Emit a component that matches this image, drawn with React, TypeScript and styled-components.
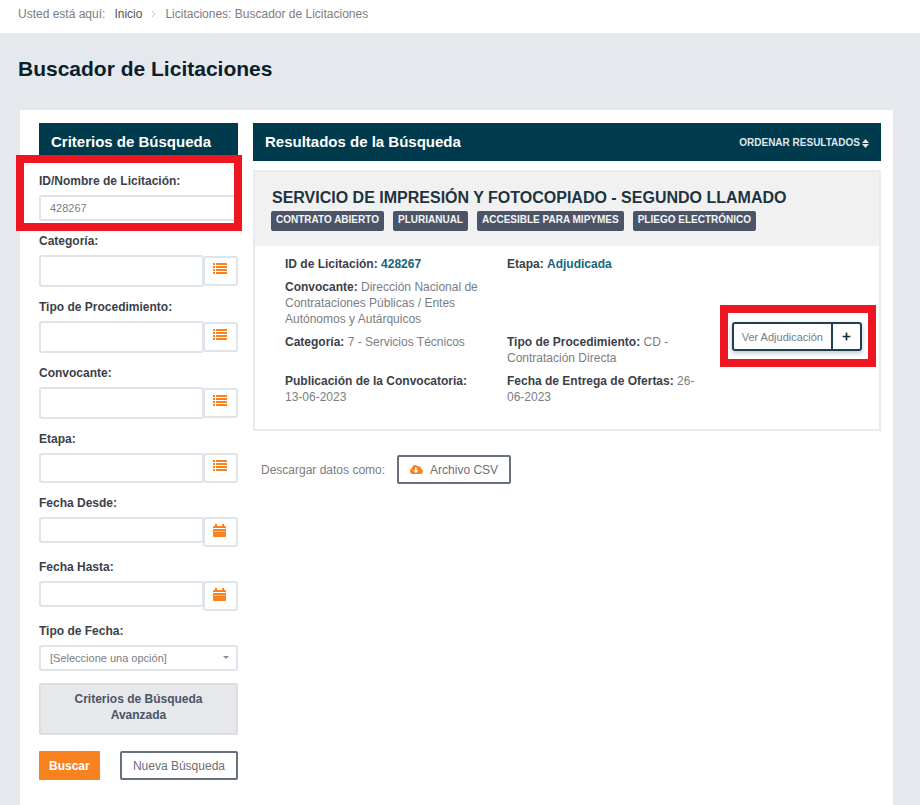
import React from "react";
import styled, { createGlobalStyle, css } from "styled-components";
import { FaCloudDownloadAlt, FaPlus } from "react-icons/fa";

const colors = {
  page: "#e5e8ed",
  navy: "#003a4d",
  ink: "#3b3f4a",
  muted: "#7b7d82",
  line: "#dfe4ea",
  slate: "#4b5567",
  orange: "#f88220",
  teal: "#17647f",
  red: "#ee1620",
};

const GlobalStyle = createGlobalStyle`
  *, *::before, *::after { box-sizing: border-box; }
  body {
    margin: 0;
    background: ${colors.page};
    color: ${colors.muted};
    font-family: "Liberation Sans", Arial, sans-serif;
    font-size: 12px;
    line-height: 16px;
  }
  button, input, select { font: inherit; }
`;

const Page = styled.div`
  display: flex;
  flex-direction: column;
  min-height: 100vh;
`;

const Breadcrumb = styled.nav`
  display: flex;
  align-items: center;
  gap: 9px;
  padding: 6px 18px 11px;
  background: #fff;
  white-space: nowrap;
`;

const CrumbLink = styled.a`
  color: #50525a;
  text-decoration: none;
`;

const CrumbArrow = styled.svg`
  width: 5px;
  height: 8px;
  fill: none;
  stroke: #c3c5ca;
`;

const PageTitle = styled.h1`
  margin: 24px 18px 29px;
  color: #0a1f2c;
  font-size: 21px;
  line-height: 24px;
`;

const Panel = styled.main`
  flex: 1;
  display: grid;
  grid-template-columns: 199fr 628fr;
  align-items: start;
  gap: 15px;
  margin: 0 27px 0 20px;
  padding: 13px 12px 24px 19px;
  background: #fff;
`;

const Column = styled.section`
  display: flex;
  flex-direction: column;
  min-width: 0;
`;

const Filters = styled.form`
  display: flex;
  flex-direction: column;
  gap: 12px;
`;

const Bar = styled.header`
  display: flex;
  align-items: center;
  justify-content: space-between;
  height: 38px;
  padding: 0 12px;
  background: ${colors.navy};
  color: #fff;
`;

const BarTitle = styled.h2`
  margin: 0;
  font-size: 15px;
  line-height: 20px;
  white-space: nowrap;
`;

const SortButton = styled.button`
  display: flex;
  align-items: center;
  gap: 2px;
  padding: 2px 0 0;
  border: 0;
  background: none;
  color: #dfe8ec;
  font-size: 10px;
  font-weight: 700;
  cursor: pointer;
`;

const Field = styled.div`
  position: relative;
  display: flex;
  flex-direction: column;
  gap: 6px;
`;

const Label = styled.label`
  color: ${colors.ink};
  font-weight: 700;
`;

const control = css`
  min-width: 0;
  border: 2px solid ${colors.line};
  border-radius: 3px;
  background: #fff;
  color: ${colors.muted};
  font-size: 11px;
`;

const TextInput = styled.input<{ $height: number }>`
  ${control}
  flex: 1 1 auto;
  height: ${(p) => p.$height}px;
  padding: 0 9px;
`;

const InputGroup = styled.div<{ $align: "center" | "flex-start" }>`
  display: flex;
  align-items: ${(p) => p.$align};
`;

const PickerButton = styled.button`
  ${control}
  flex: 0 0 35px;
  display: flex;
  justify-content: center;
  height: 30px;
  margin-left: -1px;
  padding: 5px 2px 0 0;
  color: ${colors.orange};
  cursor: pointer;
`;

const SelectBox = styled.div`
  position: relative;
  display: flex;
`;

const Select = styled.select`
  ${control}
  flex: 1;
  height: 26px;
  padding: 0 24px 0 9px;
  appearance: none;
`;

const Caret = styled.svg`
  position: absolute;
  top: 11px;
  right: 9px;
  width: 6px;
  height: 4px;
  fill: #8b8d92;
  pointer-events: none;
`;

const AdvancedButton = styled.button`
  display: flex;
  justify-content: center;
  min-height: 52px;
  padding: 6px 28px;
  border: 2px solid #dcdedf;
  border-radius: 2px;
  background: #e6e8ec;
  color: ${colors.slate};
  font-weight: 700;
  cursor: pointer;
`;

const Actions = styled.div`
  display: flex;
  justify-content: space-between;
  margin-top: 4px;
`;

const SolidButton = styled.button`
  height: 29px;
  padding: 0 10px;
  border: 0;
  border-radius: 1px;
  background: ${colors.orange};
  color: #fff;
  font-weight: 700;
  cursor: pointer;
`;

const OutlineButton = styled.button`
  display: flex;
  align-items: center;
  gap: 7px;
  height: 29px;
  padding: 0 11px;
  border: 2px solid #66707f;
  border-radius: 2px;
  background: #fff;
  color: #6b6e76;
  white-space: nowrap;
  cursor: pointer;
`;

const Card = styled.article`
  margin-top: 9px;
  border: 2px solid #e8eaef;
`;

const CardHead = styled.div`
  display: flex;
  flex-direction: column;
  gap: 3px;
  padding: 16px 16px 15px;
  background: #f1f1f1;
`;

const CardTitle = styled.h3`
  margin: 0;
  padding-left: 1px;
  color: #1d3340;
  font-size: 16px;
  line-height: 20px;
`;

const Tags = styled.ul`
  display: flex;
  flex-wrap: wrap;
  gap: 9px;
  margin: 0;
  padding: 0;
  list-style: none;
`;

const Tag = styled.li`
  padding: 1px 5px 3px;
  border-radius: 2px;
  background: ${colors.slate};
  color: #f4f5f7;
  font-size: 10px;
  font-weight: 700;
`;

const CardBody = styled.div`
  display: grid;
  grid-template-columns: 444fr 133fr;
  padding: 10px 17px 24px 30px;
`;

const Facts = styled.dl`
  display: grid;
  grid-template-columns: 1fr 1fr;
  gap: 7px 0;
  margin: 0;
`;

const Fact = styled.div`
  padding-right: 24px;
`;

const Term = styled.dt`
  display: inline;
  color: ${colors.ink};
  font-weight: 700;
`;

const Detail = styled.dd<{ $strong?: boolean }>`
  display: inline;
  margin: 0;
  ${(p) => p.$strong && css`color: ${colors.teal}; font-weight: 700;`}
`;

const CardActions = styled.div`
  display: flex;
  align-items: center;
  justify-content: flex-end;
  padding-top: 12px;
`;

const ButtonGroup = styled.div`
  position: relative;
  display: flex;
  box-shadow: 0 2px 5px #b9c6d1;
`;

const GroupButton = styled.button<{ $side: "left" | "right" }>`
  display: flex;
  align-items: center;
  height: 29px;
  padding: 0 ${(p) => (p.$side === "left" ? 8 : 9)}px;
  border: 2px solid #213f4d;
  border-radius: ${(p) => (p.$side === "left" ? "3px 0 0 3px" : "0 3px 3px 0")};
  margin-left: ${(p) => (p.$side === "left" ? 0 : -2)}px;
  background: #fff;
  color: ${(p) => (p.$side === "left" ? "#777b84" : "#12303e")};
  font-size: 11px;
  white-space: nowrap;
  cursor: pointer;
`;

const Highlight = styled.div<{ $inset: string }>`
  position: absolute;
  z-index: 1;
  inset: ${(p) => p.$inset};
  border: 8px solid ${colors.red};
  pointer-events: none;
`;

const Download = styled.div`
  display: flex;
  align-items: center;
  gap: 12px;
  margin: 24px 8px 0;
`;

const ListIcon = () => (
  <svg width="14" height="12" viewBox="0 0 14 12" fill="currentColor" aria-hidden="true">
    {[0, 3, 6, 9].map((y) => (
      <React.Fragment key={y}>
        <rect x="0" y={y} width="2" height="2" />
        <rect x="3" y={y} width="11" height="2" />
      </React.Fragment>
    ))}
  </svg>
);

const CalendarIcon = () => (
  <svg width="13" height="13" viewBox="0 0 13 13" fill="currentColor" aria-hidden="true">
    <path d="M2 0h2v2h5V0h2v2h1q1 0 1 1v1H0V3q0-1 1-1h1z" />
    <path d="M0 5h13v7q0 1-1 1H1q-1 0-1-1z" />
    <path d="M1 7.500h11" stroke="#fcc08c" />
  </svg>
);

const SortIcon = () => (
  <svg width="7" height="9" viewBox="0 0 7 9" fill="currentColor" aria-hidden="true">
    <path d="M3.500 0L7 4H0zM0 5h7L3.500 9z" />
  </svg>
);

const pickers = [
  { id: "categoria", label: "Categoría:", height: 32 },
  { id: "tipo-procedimiento", label: "Tipo de Procedimiento:", height: 32 },
  { id: "convocante", label: "Convocante:", height: 32 },
  { id: "etapa", label: "Etapa:", height: 30 },
];

const dates = [
  { id: "fecha-desde", label: "Fecha Desde:" },
  { id: "fecha-hasta", label: "Fecha Hasta:" },
];

const tags = ["CONTRATO ABIERTO", "PLURIANUAL", "ACCESIBLE PARA MIPYMES", "PLIEGO ELECTRÓNICO"];

const facts = [
  { term: "ID de Licitación:", value: "428267", strong: true },
  { term: "Etapa:", value: "Adjudicada", strong: true },
  {
    term: "Convocante:",
    value: "Dirección Nacional de Contrataciones Públicas / Entes Autónomos y Autárquicos",
  },
  null,
  { term: "Categoría:", value: "7 - Servicios Técnicos" },
  { term: "Tipo de Procedimiento:", value: "CD - Contratación Directa" },
  { term: "Publicación de la Convocatoria:", value: "13-06-2023" },
  { term: "Fecha de Entrega de Ofertas:", value: "26-06-2023" },
];

export default function App() {
  return (
    <>
      <GlobalStyle />
      <Page>
        <Breadcrumb aria-label="Ruta">
          <span>Usted está aquí:</span>
          <CrumbLink href="#">Inicio</CrumbLink>
          <CrumbArrow viewBox="0 0 5 8" aria-hidden="true">
            <path d="M1 1l3 3-3 3" />
          </CrumbArrow>
          <span>Licitaciones: Buscador de Licitaciones</span>
        </Breadcrumb>
        <PageTitle>Buscador de Licitaciones</PageTitle>
        <Panel>
          <Column>
            <Filters onSubmit={(e) => e.preventDefault()}>
              <Bar>
                <BarTitle>Criterios de Búsqueda</BarTitle>
              </Bar>
              <Field>
                <Label htmlFor="nombre">ID/Nombre de Licitación:</Label>
                <TextInput id="nombre" $height={26} defaultValue="428267" />
                <Highlight $inset="-18px -4px -10px -23px" />
              </Field>
              {pickers.map((p) => (
                <Field key={p.id}>
                  <Label htmlFor={p.id}>{p.label}</Label>
                  <InputGroup $align="center">
                    <TextInput id={p.id} $height={p.height} />
                    <PickerButton type="button" aria-label={`Elegir ${p.label}`}>
                      <ListIcon />
                    </PickerButton>
                  </InputGroup>
                </Field>
              ))}
              {dates.map((d) => (
                <Field key={d.id}>
                  <Label htmlFor={d.id}>{d.label}</Label>
                  <InputGroup $align="flex-start">
                    <TextInput id={d.id} $height={26} />
                    <PickerButton type="button" aria-label={`Elegir ${d.label}`}>
                      <CalendarIcon />
                    </PickerButton>
                  </InputGroup>
                </Field>
              ))}
              <Field>
                <Label htmlFor="tipo-fecha">Tipo de Fecha:</Label>
                <SelectBox>
                  <Select id="tipo-fecha">
                    <option>[Seleccione una opción]</option>
                  </Select>
                  <Caret viewBox="0 0 6 4" aria-hidden="true">
                    <path d="M0 0h6L3 3z" />
                  </Caret>
                </SelectBox>
              </Field>
              <AdvancedButton type="button">Criterios de Búsqueda Avanzada</AdvancedButton>
              <Actions>
                <SolidButton type="submit">Buscar</SolidButton>
                <OutlineButton type="reset">Nueva Búsqueda</OutlineButton>
              </Actions>
            </Filters>
          </Column>
          <Column>
            <Bar>
              <BarTitle>Resultados de la Búsqueda</BarTitle>
              <SortButton type="button">
                ORDENAR RESULTADOS <SortIcon />
              </SortButton>
            </Bar>
            <Card>
              <CardHead>
                <CardTitle>SERVICIO DE IMPRESIÓN Y FOTOCOPIADO - SEGUNDO LLAMADO</CardTitle>
                <Tags>
                  {tags.map((t) => (
                    <Tag key={t}>{t}</Tag>
                  ))}
                </Tags>
              </CardHead>
              <CardBody>
                <Facts>
                  {facts.map((f, i) =>
                    f ? (
                      <Fact key={f.term}>
                        <Term>{f.term}</Term>{" "}
                        <Detail $strong={f.strong}>{f.value}</Detail>
                      </Fact>
                    ) : (
                      <Fact key={i} />
                    )
                  )}
                </Facts>
                <CardActions>
                  <ButtonGroup>
                    <GroupButton type="button" $side="left">
                      Ver Adjudicación
                    </GroupButton>
                    <GroupButton type="button" $side="right" aria-label="Más opciones">
                      <FaPlus size={9} />
                    </GroupButton>
                    <Highlight $inset="-17px -14px -16px -12px" />
                  </ButtonGroup>
                </CardActions>
              </CardBody>
            </Card>
            <Download>
              <span>Descargar datos como:</span>
              <OutlineButton type="button">
                <FaCloudDownloadAlt size={13} color={colors.orange} />
                Archivo CSV
              </OutlineButton>
            </Download>
          </Column>
        </Panel>
      </Page>
    </>
  );
}
